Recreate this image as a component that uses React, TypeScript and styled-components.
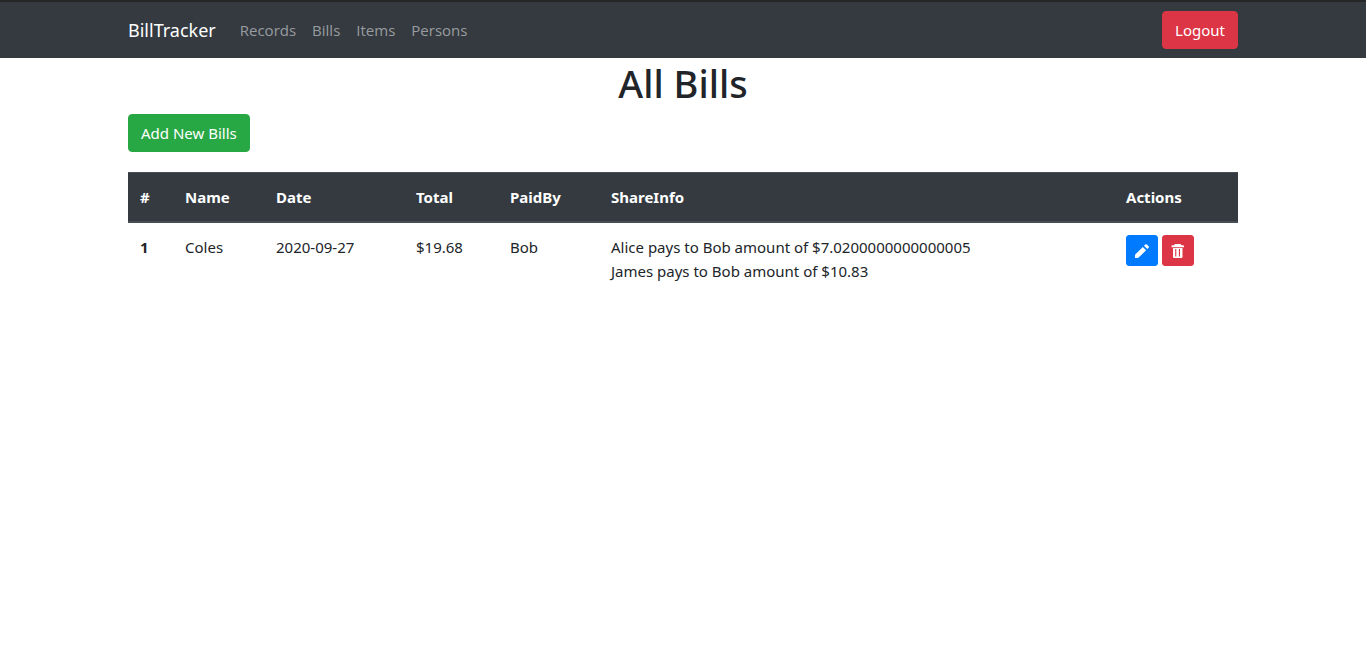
import React from "react";
import styled, { createGlobalStyle, css } from "styled-components";

const GlobalStyle = createGlobalStyle`
  *, *::before, *::after { box-sizing: border-box; }
  body {
    margin: 0;
    background: #fff;
    color: #212529;
    font-family: "Noto Sans", "Open Sans", sans-serif;
    font-size: 15px;
    line-height: 24px;
  }
`;

const container = css`
  width: 100%;
  max-width: 1140px;
  margin: 0 auto;
  padding: 0 15px;
`;

const Header = styled.header`
  background: #343a40;
  border-top: 2px solid #242628;
`;

const NavBar = styled.nav`
  ${container}
  display: flex;
  align-items: center;
  min-height: 56px;
`;

const Brand = styled.a`
  margin-right: 16px;
  color: #fff;
  font-size: 18px;
  line-height: 30px;
  text-decoration: none;
`;

const NavList = styled.ul`
  display: flex;
  margin: 0 auto 0 0;
  padding: 0;
  list-style: none;
  font-family: "Open Sans", "Noto Sans", sans-serif;
`;

const NavLink = styled.a`
  display: block;
  padding: 8px;
  color: #999c9f;
  text-decoration: none;
`;

const Button = styled.button<{ $color: string; $small?: boolean }>`
  display: inline-flex;
  align-items: center;
  justify-content: center;
  min-height: ${(p) => (p.$small ? 31 : 38)}px;
  padding: ${(p) => (p.$small ? "4px 8px" : "6px 12px")};
  border: 1px solid ${(p) => p.$color};
  border-radius: ${(p) => (p.$small ? 3 : 4)}px;
  background: ${(p) => p.$color};
  color: #fff;
  font: inherit;
  cursor: pointer;

  svg {
    display: block;
  }
`;

const Main = styled.main`
  ${container}
`;

const Title = styled.h1`
  margin: 0 0 6px;
  font-size: 38px;
  font-weight: 500;
  line-height: 50px;
  text-align: center;
`;

const Table = styled.table`
  width: 100%;
  margin-top: 20px;
  border-collapse: separate;
  border-spacing: 0;
  table-layout: fixed;
  text-align: left;
`;

const Column = styled.col<{ $width?: number }>`
  width: ${(p) => (p.$width ? `${p.$width}px` : "auto")};
`;

const HeadCell = styled.th`
  padding: 12px;
  border-top: 1px solid #454d55;
  border-bottom: 2px solid #454d55;
  background: #343a40;
  color: #fff;
  font-weight: 700;
`;

const Cell = styled.td`
  padding: 12px;
  vertical-align: top;
`;

const Actions = styled.div`
  display: flex;
  gap: 4px;
`;

const PencilIcon = () => (
  <svg width="14" height="14" viewBox="0 0 14 14" fill="currentColor" aria-hidden="true">
    <path d="M0 14v-3.300l7.800-7.800 3.300 3.300L4.200 13.100Q3.300 14 2.200 14zM9 1.700L10.300.6a1.200 1.200 0 0 1 1.600 0l1.700 1.700a1 1 0 0 1 0 1.400L12.300 5z" />
  </svg>
);

const TrashIcon = () => (
  <svg width="14" height="14" viewBox="0 0 14 14" fill="currentColor" aria-hidden="true">
    <path
      fillRule="evenodd"
      d="M4 0h5.500L10.500 1.300H12a1 1 0 0 1 1 1V3.300H0.500V2.300a1 1 0 0 1 1-1H3zM2 4h9.500v9a1 1 0 0 1-1 1H3a1 1 0 0 1-1-1zM4.200 5V12.500h1.100V5zM7.900 5V12.500H9V5z"
    />
  </svg>
);

const links = ["Records", "Bills", "Items", "Persons"];

const columns: { label: string; width?: number }[] = [
  { label: "#", width: 45 },
  { label: "Name", width: 91 },
  { label: "Date", width: 140 },
  { label: "Total", width: 94 },
  { label: "PaidBy", width: 101 },
  { label: "ShareInfo" },
  { label: "Actions", width: 124 },
];

const bills = [
  {
    id: 1,
    name: "Coles",
    date: "2020-09-27",
    total: "$19.68",
    paidBy: "Bob",
    shares: [
      "Alice pays to Bob amount of $7.0200000000000005",
      "James pays to Bob amount of $10.83",
    ],
  },
];

export default function App() {
  return (
    <>
      <GlobalStyle />
      <Header>
        <NavBar>
          <Brand href="#">BillTracker</Brand>
          <NavList>
            {links.map((link) => (
              <li key={link}>
                <NavLink href="#">{link}</NavLink>
              </li>
            ))}
          </NavList>
          <Button type="button" $color="#dc3545">Logout</Button>
        </NavBar>
      </Header>
      <Main>
        <Title>All Bills</Title>
        <Button type="button" $color="#28a745">Add New Bills</Button>
        <Table>
          <colgroup>
            {columns.map((c) => (
              <Column key={c.label} $width={c.width} />
            ))}
          </colgroup>
          <thead>
            <tr>
              {columns.map((c) => (
                <HeadCell key={c.label} scope="col">{c.label}</HeadCell>
              ))}
            </tr>
          </thead>
          <tbody>
            {bills.map((bill) => (
              <tr key={bill.id}>
                <Cell as="th" scope="row">{bill.id}</Cell>
                <Cell>{bill.name}</Cell>
                <Cell>{bill.date}</Cell>
                <Cell>{bill.total}</Cell>
                <Cell>{bill.paidBy}</Cell>
                <Cell>
                  {bill.shares.map((share) => (
                    <div key={share}>{share}</div>
                  ))}
                </Cell>
                <Cell>
                  <Actions>
                    <Button type="button" $small $color="#007bff" aria-label="Edit bill">
                      <PencilIcon />
                    </Button>
                    <Button type="button" $small $color="#dc3545" aria-label="Delete bill">
                      <TrashIcon />
                    </Button>
                  </Actions>
                </Cell>
              </tr>
            ))}
          </tbody>
        </Table>
      </Main>
    </>
  );
}
